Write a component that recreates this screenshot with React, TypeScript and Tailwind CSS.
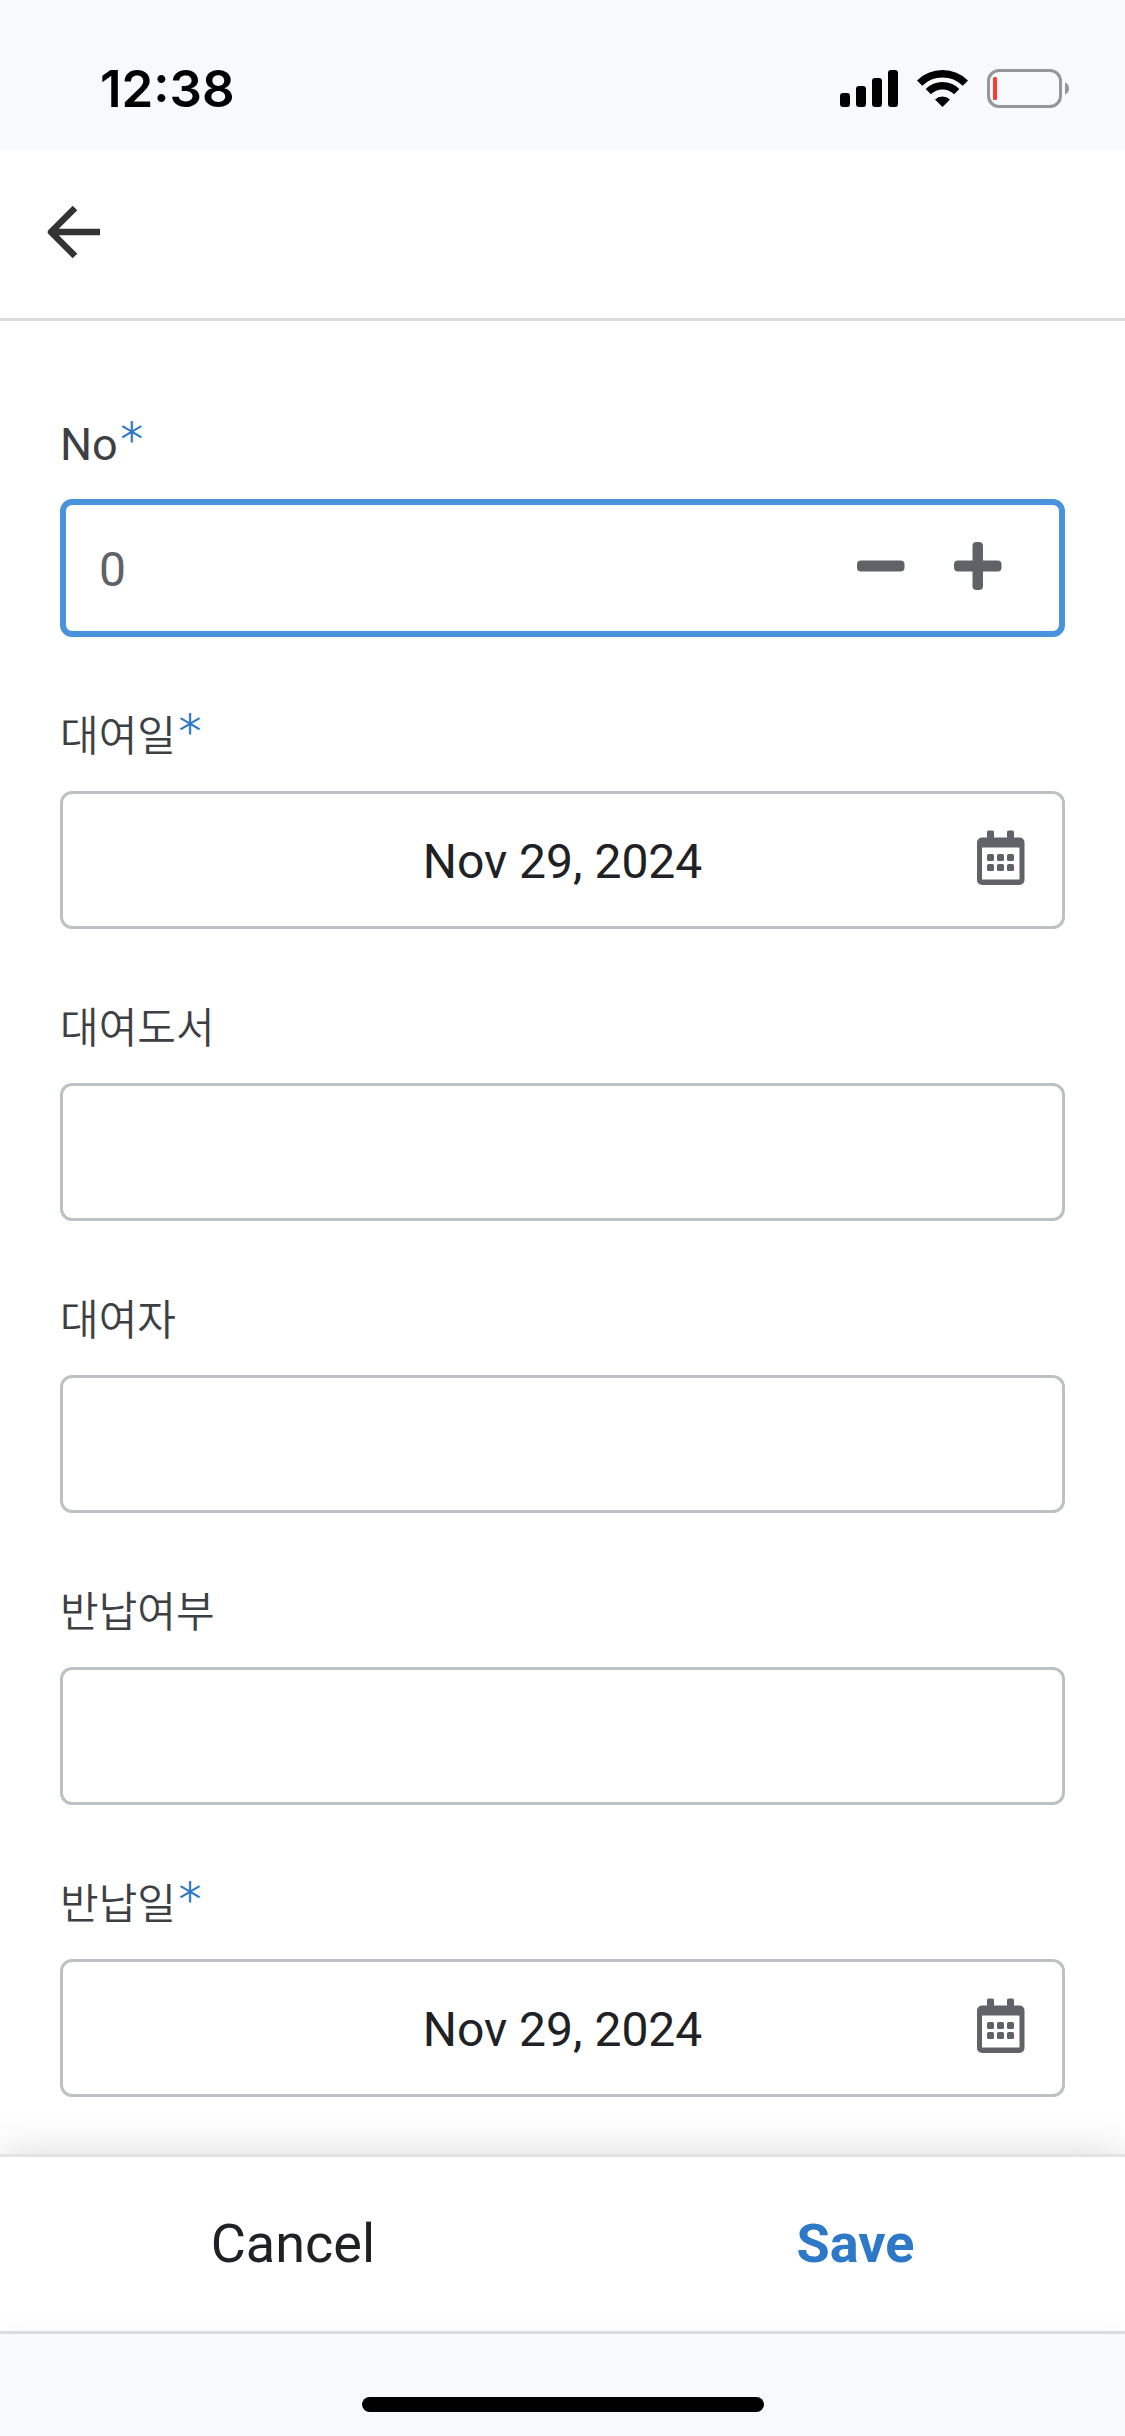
import React, { useState } from "react";

interface FieldProps {
    id: string;
    label: string;
    required?: boolean;
    children: React.ReactNode;
}

interface InputProps {
    id: string;
    value: string;
    onChange: (value: string) => void;
}

const StatusBar: React.FC = () => (
    <div className="flex h-[150px] items-center justify-between bg-[#f8f9fb] pt-[27px] pr-14 pl-[100px]">
        <span className="font-[Inter,sans-serif] text-[51px] leading-none font-semibold text-black">
            12:38
        </span>
        <div className="flex items-center gap-[19px]">
            <svg width="58" height="39" viewBox="0 0 58 39" aria-hidden="true">
                <rect x="0" y="24" width="10" height="14" rx="3" />
                <rect x="16" y="17" width="10" height="21" rx="3" />
                <rect x="32" y="9" width="10" height="29" rx="3" />
                <rect x="48" y="1" width="10" height="37" rx="3" />
            </svg>
            <svg width="51" height="39" viewBox="0 0 51 39" aria-hidden="true">
                <g fill="none" stroke="#000" strokeWidth="7.4">
                    <path d="M2.6 14.2a32.4 32.4 0 0 1 45.8 0" />
                    <path d="M11.3 22.6a20.2 20.2 0 0 1 28.4 0" />
                </g>
                <path d="M18 30.6a10.8 10.8 0 0 1 15 0L25.5 38z" />
            </svg>
            <svg width="82" height="39" viewBox="0 0 82 39" aria-hidden="true">
                <rect
                    x="1.5"
                    y="1.5"
                    width="72"
                    height="36"
                    rx="10.5"
                    fill="none"
                    stroke="#969696"
                    strokeWidth="3"
                />
                <rect x="6" y="8" width="4" height="23" rx="1.5" fill="#ff3b30" />
                <path d="M78 13.5a6.5 6.5 0 0 1 0 12z" fill="#969696" />
            </svg>
        </div>
    </div>
);

const CalendarIcon: React.FC = () => (
    <svg
        width="48"
        height="56"
        viewBox="0 0 48 56"
        fill="#5f6368"
        aria-hidden="true"
    >
        <path
            fillRule="evenodd"
            d="M10 8V2a1.500 1.500 0 0 1 1.500-1.500h4a1.500 1.500 0 0 1 1.500 1.500v5.500h13V2a1.500 1.500 0 0 1 1.500-1.500h4a1.500 1.500 0 0 1 1.500 1.500v5.500h5.500a5 5 0 0 1 5 5v37.500a5 5 0 0 1-5 5H5a5 5 0 0 1-5-5V12.500a5 5 0 0 1 5-5h5zM5 17.500v32h37.500v-32z"
        />
        <rect x="10" y="24" width="7" height="7" rx="1.500" />
        <rect x="20" y="24" width="7" height="7" rx="1.500" />
        <rect x="30" y="24" width="7" height="7" rx="1.500" />
        <rect x="10" y="34" width="7" height="7" rx="1.500" />
        <rect x="20" y="34" width="7" height="7" rx="1.500" />
        <rect x="30" y="34" width="7" height="7" rx="1.500" />
    </svg>
);

const Field: React.FC<FieldProps> = ({ id, label, required, children }) => (
    <div>
        <label
            htmlFor={id}
            className="mb-[23px] flex h-16 items-center gap-[3px] text-[#3c4043]"
        >
            {/[가-힣]/.test(label) ? (
                <span className="pb-1.5 font-['Noto_Sans_CJK_KR',sans-serif] text-[42px] leading-16 font-[350]">
                    {label}
                </span>
            ) : (
                <span className="pt-0.5 text-[45px] leading-16">{label}</span>
            )}
            {required && (
                <span className="pb-2 font-['DejaVu_Sans',sans-serif] text-[44px] leading-16 font-extralight text-[#2d79c7] [-webkit-text-stroke:1px_#2d79c7]">
                    *
                </span>
            )}
        </label>
        {children}
    </div>
);

const TextInput: React.FC<InputProps> = ({ id, value, onChange }) => (
    <input
        id={id}
        type="text"
        value={value}
        onChange={(e) => onChange(e.target.value)}
        className="block h-[138px] w-full rounded-xl border-3 border-[#bdc1c6] px-9 text-5xl text-[#202124] outline-none"
    />
);

const DateInput: React.FC<InputProps> = ({ id, value, onChange }) => (
    <div className="flex h-[138px] items-center rounded-xl border-3 border-[#bdc1c6] px-[13px]">
        <input
            id={id}
            type="text"
            value={value}
            onChange={(e) => onChange(e.target.value)}
            className="h-full min-w-0 flex-1 pt-0.5 pl-24 text-center text-5xl text-[#202124] outline-none"
        />
        <button
            type="button"
            aria-label="Open calendar"
            className="flex h-full w-24 items-center justify-center pb-1"
        >
            <CalendarIcon />
        </button>
    </div>
);

const NumberInput: React.FC<InputProps> = ({ id, value, onChange }) => {
    const step = (amount: number) => {
        onChange(String((Number(value) || 0) + amount));
    };

    return (
        <div className="flex h-[138px] items-center rounded-xl border-6 border-[#4992dc] px-[33px]">
            <input
                id={id}
                type="text"
                inputMode="numeric"
                value={value}
                onChange={(e) => onChange(e.target.value)}
                className="h-full min-w-0 flex-1 pt-0.5 text-5xl text-[#5f6368] outline-none"
            />
            <button
                type="button"
                aria-label="Decrease"
                onClick={() => step(-1)}
                className="flex h-full w-[97px] items-center justify-center pb-1"
            >
                <svg width="48" height="48" viewBox="0 0 48 48" fill="#5f6368">
                    <rect x="0" y="18.500" width="47.500" height="11" rx="4" />
                </svg>
            </button>
            <button
                type="button"
                aria-label="Increase"
                onClick={() => step(1)}
                className="flex h-full w-[97px] items-center justify-center pb-1"
            >
                <svg width="48" height="48" viewBox="0 0 48 48" fill="#5f6368">
                    <rect x="0" y="18.500" width="47.500" height="11" rx="4" />
                    <rect x="18.500" y="0" width="10.500" height="48" rx="4" />
                </svg>
            </button>
        </div>
    );
};

const App: React.FC = () => {
    const [form, setForm] = useState({
        no: "0",
        rentDate: "Nov 29, 2024",
        book: "",
        renter: "",
        returned: "",
        returnDate: "Nov 29, 2024",
    });

    const update = (key: keyof typeof form) => (value: string) => {
        setForm({ ...form, [key]: value });
    };

    return (
        <div className="flex min-h-screen flex-col bg-white font-[Roboto,'Noto_Sans_CJK_KR',sans-serif]">
            <StatusBar />
            <header className="flex h-[171px] items-center border-b-3 border-[#dadce0] px-[47px] pb-1">
                <button type="button" aria-label="Back">
                    <svg
                        width="54"
                        height="54"
                        viewBox="0 0 54 54"
                        fill="none"
                        stroke="#333"
                        strokeWidth="6.500"
                        strokeLinejoin="round"
                        aria-hidden="true"
                    >
                        <path d="M28 3 4 27l24 24M6 27h47" />
                    </svg>
                </button>
            </header>
            <form
                id="rental"
                onSubmit={(e) => e.preventDefault()}
                className="flex flex-1 flex-col gap-[67px] px-[60px] pt-[91px] pb-[57px]"
            >
                <Field id="no" label="No" required>
                    <NumberInput id="no" value={form.no} onChange={update("no")} />
                </Field>
                <Field id="rentDate" label="대여일" required>
                    <DateInput
                        id="rentDate"
                        value={form.rentDate}
                        onChange={update("rentDate")}
                    />
                </Field>
                <Field id="book" label="대여도서">
                    <TextInput id="book" value={form.book} onChange={update("book")} />
                </Field>
                <Field id="renter" label="대여자">
                    <TextInput
                        id="renter"
                        value={form.renter}
                        onChange={update("renter")}
                    />
                </Field>
                <Field id="returned" label="반납여부">
                    <TextInput
                        id="returned"
                        value={form.returned}
                        onChange={update("returned")}
                    />
                </Field>
                <Field id="returnDate" label="반납일" required>
                    <DateInput
                        id="returnDate"
                        value={form.returnDate}
                        onChange={update("returnDate")}
                    />
                </Field>
            </form>
            <footer className="relative flex h-[177px] items-center justify-around border-t-3 border-[#e3e3e3] bg-white pb-0.5 text-[54px] shadow-[0_0_42px_rgba(0,0,0,0.15)]">
                <button type="button" className="text-[#202124]">
                    Cancel
                </button>
                <button
                    type="submit"
                    form="rental"
                    className="font-bold text-[#2d79c7]"
                >
                    Save
                </button>
            </footer>
            {/* home indicator */}
            <div className="relative flex h-[105px] items-end justify-center border-t-3 border-[#dadce0] bg-[#f8f9fb] pb-6 shadow-[0_6px_36px_rgba(0,0,0,0.05)]">
                <div className="h-[15px] w-[402px] rounded-full bg-black" />
            </div>
        </div>
    );
};

export default App;
